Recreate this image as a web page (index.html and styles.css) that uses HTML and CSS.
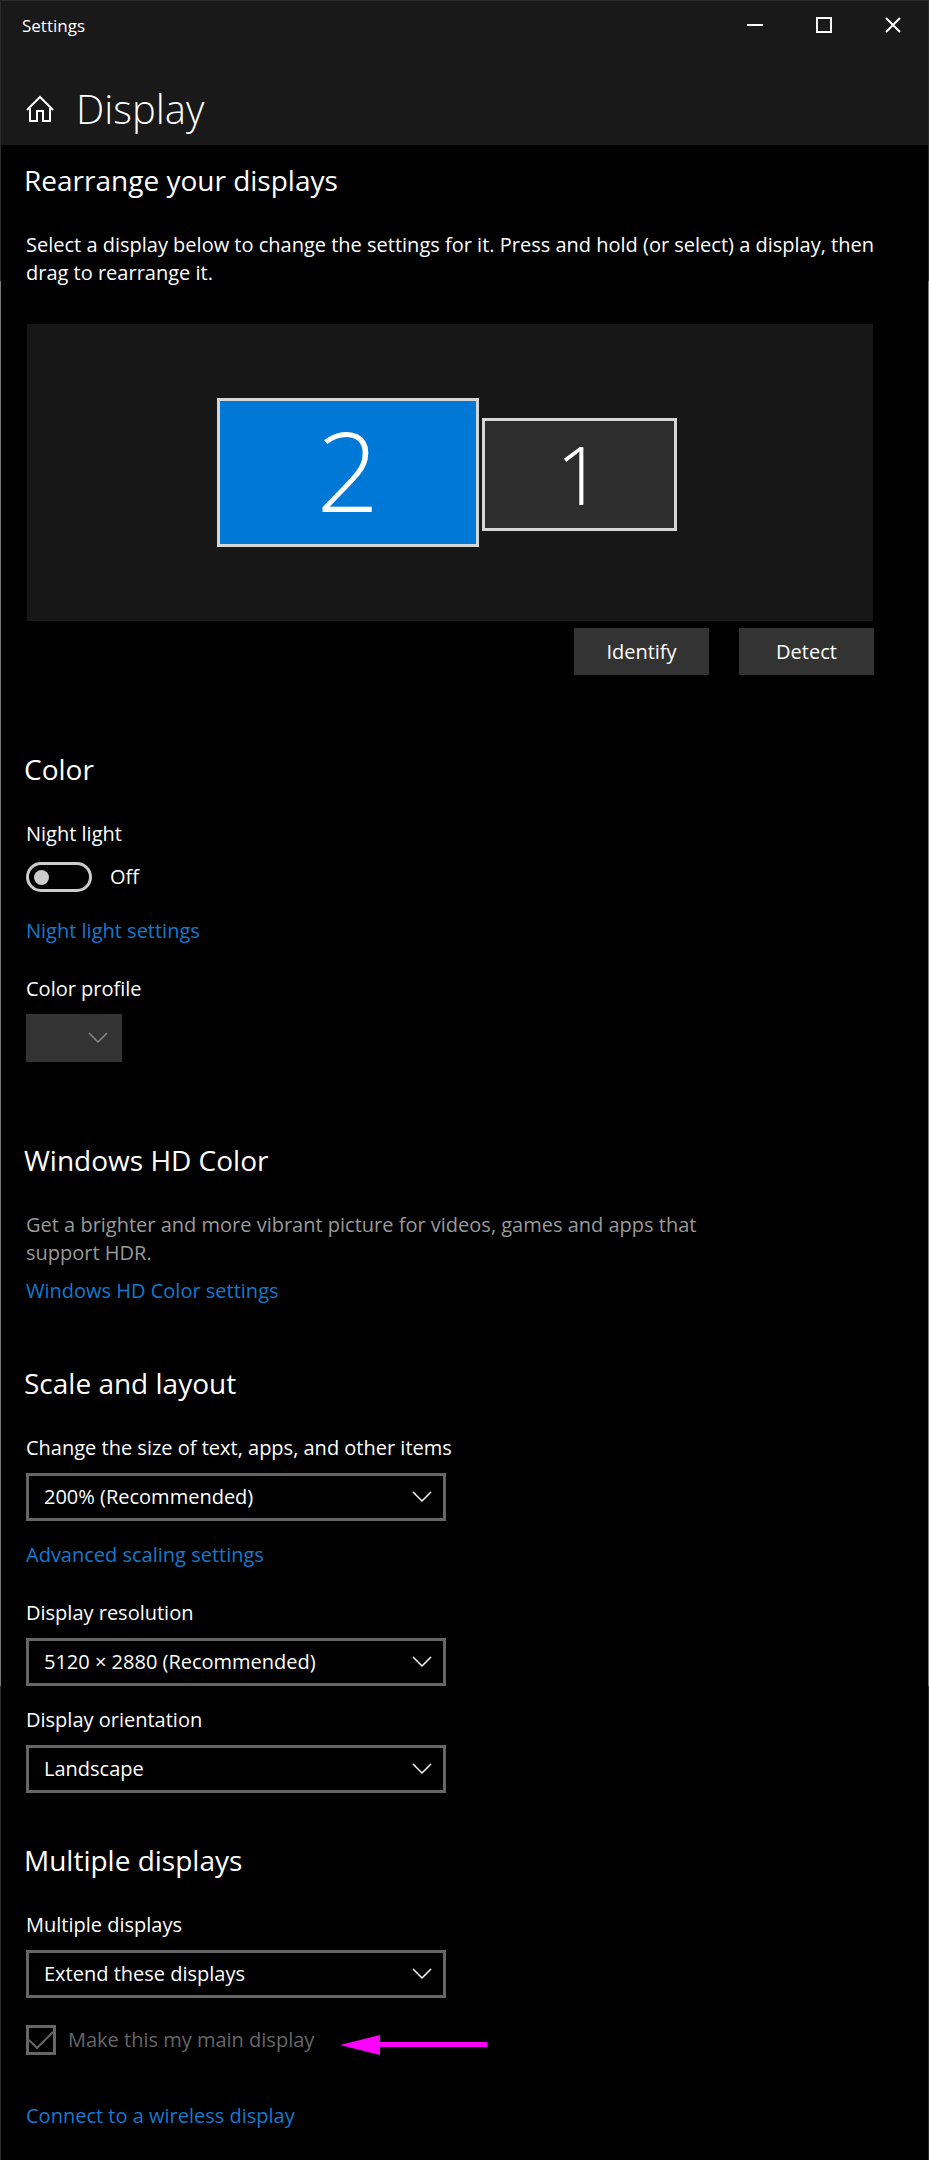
FILE: index.html
```html
<!DOCTYPE html>
<html lang="en">
<head>
    <meta charset="utf-8">
    <title>Settings</title>
    <link rel="stylesheet" href="styles.css">
</head>
<body>
<div class="window">
    <header class="header">
        <div class="titlebar">
            <span class="caption">Settings</span>
            <div class="controls">
                <button type="button" aria-label="Minimize">
                    <svg width="16" height="16" viewBox="0 0 16 16"><path d="M0 8h16"/></svg>
                </button>
                <button type="button" aria-label="Maximize">
                    <svg width="16" height="16" viewBox="0 0 16 16"><path d="M1 1h14v14H1z"/></svg>
                </button>
                <button type="button" aria-label="Close">
                    <svg width="16" height="16" viewBox="0 0 16 16"><path d="M1 1l14 14M15 1L1 15"/></svg>
                </button>
            </div>
        </div>
        <div class="page-title">
            <a href="#" class="home" aria-label="Home">
                <svg width="28" height="28" viewBox="0 0 28 28"><path d="M1 15L14 2l13 13M4 13v13h7V16h6v10h7V13"/></svg>
            </a>
            <h1>Display</h1>
        </div>
    </header>

    <main class="content">
        <section class="rearrange">
            <h2>Rearrange your displays</h2>
            <p>Select a display below to change the settings for it. Press and hold (or select) a display, then drag to rearrange it.</p>
            <div class="displays">
                <button type="button" class="monitor monitor-large selected">2</button>
                <button type="button" class="monitor">1</button>
            </div>
            <div class="actions">
                <button type="button" class="btn">Identify</button>
                <button type="button" class="btn">Detect</button>
            </div>
        </section>

        <section class="color">
            <h2>Color</h2>
            <label for="nightLight">Night light</label>
            <div class="toggle-row">
                <input type="checkbox" role="switch" class="toggle" id="nightLight">
                <span>Off</span>
            </div>
            <a href="#" class="link">Night light settings</a>
            <label for="profile">Color profile</label>
            <div class="dropdown disabled">
                <select id="profile" disabled>
                    <option></option>
                </select>
                <svg width="20" height="12" viewBox="0 0 20 12"><path d="M1 1l9 9 9-9"/></svg>
            </div>
        </section>

        <section class="hd-color">
            <h2>Windows HD Color</h2>
            <p class="muted">Get a brighter and more vibrant picture for videos, games and apps that support HDR.</p>
            <a href="#" class="link">Windows HD Color settings</a>
        </section>

        <section class="scale">
            <h2>Scale and layout</h2>
            <label for="size">Change the size of text, apps, and other items</label>
            <div class="dropdown">
                <select id="size">
                    <option>200% (Recommended)</option>
                </select>
                <svg width="20" height="12" viewBox="0 0 20 12"><path d="M1 1l9 9 9-9"/></svg>
            </div>
            <a href="#" class="link">Advanced scaling settings</a>
            <label for="resolution">Display resolution</label>
            <div class="dropdown">
                <select id="resolution">
                    <option>5120 × 2880 (Recommended)</option>
                </select>
                <svg width="20" height="12" viewBox="0 0 20 12"><path d="M1 1l9 9 9-9"/></svg>
            </div>
            <label for="orientation">Display orientation</label>
            <div class="dropdown">
                <select id="orientation">
                    <option>Landscape</option>
                </select>
                <svg width="20" height="12" viewBox="0 0 20 12"><path d="M1 1l9 9 9-9"/></svg>
            </div>
        </section>

        <section class="multiple">
            <h2>Multiple displays</h2>
            <label for="multi">Multiple displays</label>
            <div class="dropdown">
                <select id="multi">
                    <option>Extend these displays</option>
                </select>
                <svg width="20" height="12" viewBox="0 0 20 12"><path d="M1 1l9 9 9-9"/></svg>
            </div>
            <div class="check-row">
                <span class="checkbox">
                    <input type="checkbox" id="mainDisplay" checked disabled>
                    <svg width="30" height="30" viewBox="0 0 30 30"><path d="M3 15l8 8L27 7"/></svg>
                </span>
                <label for="mainDisplay">Make this my main display</label>
                <svg class="arrow" width="147" height="20" viewBox="0 0 147 20"><path d="M0 10L40 0v7h107v5H40v8z"/></svg>
            </div>
            <a href="#" class="link">Connect to a wireless display</a>
        </section>
    </main>
</div>
</body>
</html>
```
FILE: styles.css
```css
* {
    box-sizing: border-box;
}

body {
    margin: 0;
    background: #000;
    color: #fff;
    font-family: "Open Sans", "Noto Sans", sans-serif;
    font-size: 20px;
    line-height: 28px;
}

button,
select {
    font: inherit;
    color: inherit;
    border: 0;
    border-radius: 0;
}

svg {
    fill: none;
    stroke: currentColor;
    flex-shrink: 0;
}

.window {
    min-height: 100vh;
    border: 1px solid;
    border-image: linear-gradient(#2b2b2b 13%, #777 13%, #777 78%, #2b2b2b 78%) 1;
}

/* header */
.header {
    height: 144px;
    background: #191919;
}

.titlebar {
    display: flex;
    justify-content: space-between;
    height: 48px;
    padding: 0 1px 0 21px;
    line-height: 50px;
    font-size: 17px;
}

.controls {
    display: flex;
}

.controls button {
    display: flex;
    align-items: center;
    justify-content: center;
    width: 69px;
    height: 48px;
    padding: 0;
    background: none;
}

.controls svg {
    stroke-width: 2;
}

.page-title {
    display: flex;
    align-items: center;
    gap: 22px;
    height: 60px;
    margin-top: 30px;
    padding-left: 25px;
}

.home {
    display: flex;
    color: #fff;
}

.home svg {
    stroke-width: 2;
}

h1 {
    margin: 0;
    font-size: 40px;
    font-weight: 300;
    line-height: 56px;
}

/* content */
.content {
    padding: 15px 54px 30px 25px;
}

h2 {
    margin: 0 0 31px -2px;
    font-size: 28px;
    font-weight: 400;
    line-height: 40px;
}

p {
    margin: 0 -24px 0 0;
}

label,
.link {
    display: block;
    width: fit-content;
}

.link {
    color: #1479ce;
    text-decoration: none;
}

.muted {
    max-width: 700px;
    margin-bottom: 10px;
    color: #999;
}

.displays {
    display: flex;
    align-items: center;
    justify-content: center;
    gap: 3px;
    height: 297px;
    margin: 37px 1px 7px;
    padding-right: 6px;
    background: #171717;
}

.monitor {
    width: 195px;
    height: 113px;
    margin-top: 4px;
    padding: 0 0 4px;
    border: 3px solid #d6d6d6;
    background: #2d2d2d;
    font-size: 82px;
    font-weight: 300;
    line-height: 100px;
}

.monitor-large {
    width: 262px;
    height: 149px;
    margin-top: 0;
    padding-bottom: 8px;
    font-size: 110px;
    line-height: 130px;
}

.selected {
    background: #0078d7;
}

.actions {
    display: flex;
    justify-content: flex-end;
    gap: 30px;
}

.btn {
    width: 135px;
    height: 47px;
    background: #333;
}

.color {
    margin-top: 74px;
}

.toggle-row {
    display: flex;
    align-items: center;
    gap: 18px;
    margin: 14px 0 25px;
    height: 30px;
}

.toggle {
    appearance: none;
    display: flex;
    align-items: center;
    width: 66px;
    height: 30px;
    margin: 0;
    padding-left: 5px;
    border: 3px solid #ccc;
    border-radius: 15px;
}

.toggle::before {
    content: "";
    width: 15px;
    height: 15px;
    border-radius: 50%;
    background: #ccc;
}

.link + label {
    margin-top: 30px;
}

.dropdown {
    display: flex;
    align-items: center;
    width: 420px;
    max-width: 100%;
    height: 48px;
    margin: 11px 0 20px;
}

.dropdown select {
    appearance: none;
    width: 100%;
    height: 48px;
    padding: 0 48px 0 15px;
    border: 3px solid #666;
    background: #000;
}

.dropdown svg {
    margin-left: -34px;
    stroke-width: 1.5;
    pointer-events: none;
}

.dropdown.disabled {
    width: 96px;
    color: #888;
}

.disabled select {
    border-color: #333;
    background: #333;
    opacity: 1;
}

.hd-color {
    margin-top: 78px;
}

.scale {
    margin-top: 58px;
}

.multiple {
    margin-top: 47px;
}

.check-row {
    display: flex;
    align-items: center;
    margin: 27px 0 47px;
    color: #666;
}

.checkbox {
    display: grid;
    margin-right: 12px;
}

.checkbox input,
.checkbox svg {
    grid-area: 1 / 1;
}

.checkbox input {
    appearance: none;
    width: 30px;
    height: 30px;
    margin: 0;
    border: 3px solid #666;
}

.checkbox svg {
    stroke-width: 2;
    pointer-events: none;
}

.arrow {
    align-self: flex-end;
    margin-left: 26px;
    fill: #f0f;
    stroke: none;
}
```
